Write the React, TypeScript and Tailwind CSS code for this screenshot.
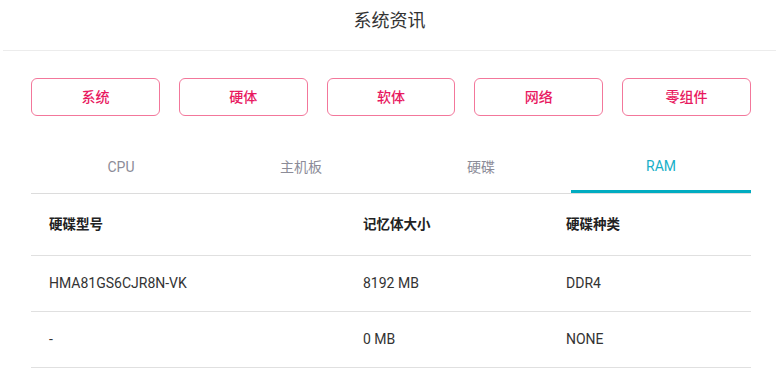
import { useState } from "react";

const sections = ["系统", "硬体", "软体", "网络", "零组件"];
const tabs = ["CPU", "主机板", "硬碟", "RAM"];

const rows = [
  { model: "HMA81GS6CJR8N-VK", size: "8192 MB", type: "DDR4" },
  { model: "-", size: "0 MB", type: "NONE" },
];

const font = "font-['Roboto','Noto_Sans_CJK_SC',sans-serif]";

export default function App() {
  const [active, setActive] = useState(3);

  return (
    <div className={`w-[776px] h-[386px] bg-white overflow-hidden ${font}`}>
      <div className="ml-[3px] h-[51px] flex items-center justify-center border-b border-[#ececec]">
        <h1 className="text-[18px] text-[#333333] pb-[10px]">系统资讯</h1>
      </div>

      <div className="px-[31px] pr-[25px]">
        <div className="flex gap-[19px] pt-[27px]">
          {sections.map((s) => (
            <button
              key={s}
              className="w-[129px] h-[38px] rounded-[6px] border border-[#f3779b] text-[14px] text-[#e8195f] font-medium flex items-center justify-center"
            >
              {s}
            </button>
          ))}
        </div>

        <div className="mt-[24px] grid grid-cols-4 border-b border-[#dcdcdc]">
          {tabs.map((t, i) => (
            <button
              key={t}
              onClick={() => setActive(i)}
              className={
                i === active
                  ? "h-[53px] text-[14px] text-[#17b0c8] border-b-[3px] border-[#00acc1] -mb-px pt-[3px]"
                  : "h-[53px] text-[14px] text-[#8c8c98] pt-[1px]"
              }
            >
              {t}
            </button>
          ))}
        </div>

        <table className="w-[720px] border-collapse">
          <colgroup>
            <col className="w-[314px]" />
            <col className="w-[203px]" />
            <col className="w-[203px]" />
          </colgroup>
          <thead>
            <tr className="border-b border-[#e0e0e0]">
              <th className="h-[61px] pl-[18px] text-left text-[13.5px] font-bold text-[#222222]">硬碟型号</th>
              <th className="h-[61px] pl-[18px] text-left text-[13.5px] font-bold text-[#222222]">记忆体大小</th>
              <th className="h-[61px] pl-[18px] text-left text-[13.5px] font-bold text-[#222222]">硬碟种类</th>
            </tr>
          </thead>
          <tbody>
            {rows.map((r, idx) => (
              <tr key={idx} className="border-b border-[#e0e0e0]">
                <td className="h-[56px] pl-[18px] text-[14px] text-[#333333]">{r.model}</td>
                <td className="h-[56px] pl-[18px] text-[14px] text-[#333333]">{r.size}</td>
                <td className="h-[56px] pl-[18px] text-[14px] text-[#333333]">{r.type}</td>
              </tr>
            ))}
          </tbody>
        </table>
      </div>
    </div>
  );
}
